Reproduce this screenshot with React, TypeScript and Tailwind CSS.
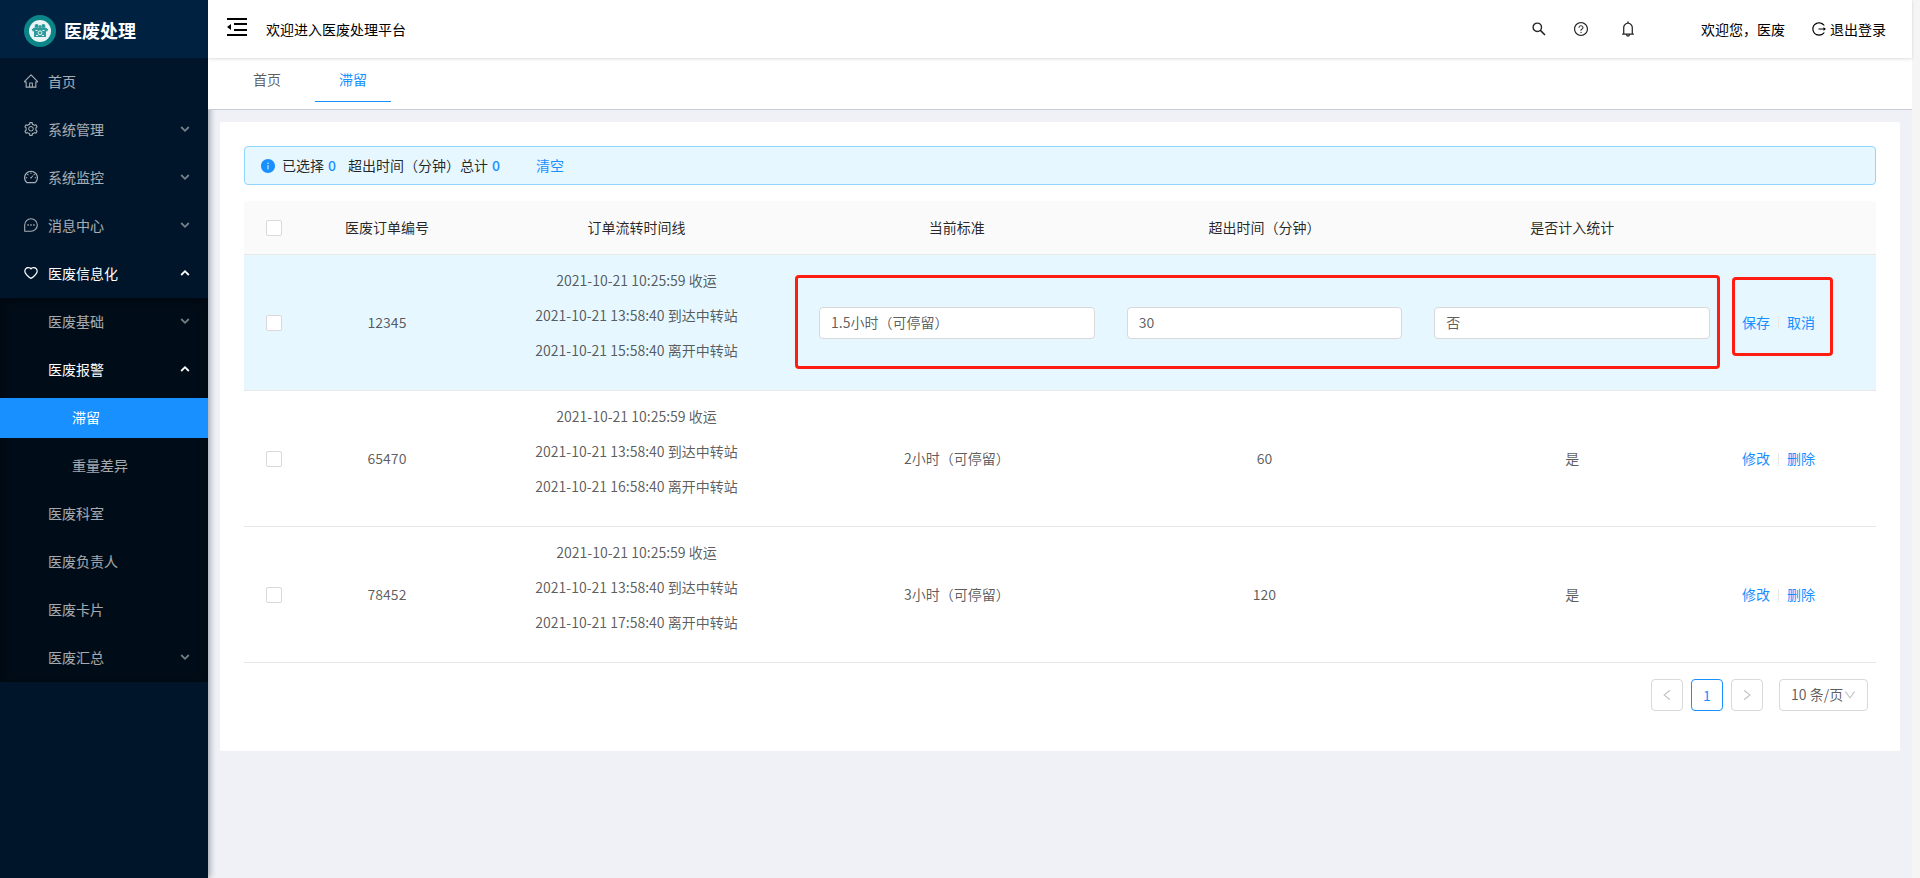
import { useState } from "react";
import {
  AiOutlineHome,
  AiOutlineSetting,
  AiOutlineDashboard,
  AiOutlineHeart,
  AiOutlineQuestionCircle,
  AiOutlineBell,
  AiOutlineLogout,
  AiOutlineLeft,
  AiOutlineRight,
  AiOutlineDown,
  AiFillInfoCircle,
} from "react-icons/ai";
import type { ComponentType } from "react";

type MenuEntry = {
  label: string;
  icon?: ComponentType<{ className?: string }>;
  arrow?: "up" | "down";
  level: 0 | 1 | 2;
  active?: boolean;
};

const topMenu: MenuEntry[] = [
  { label: "首页", icon: AiOutlineHome, level: 0 },
  { label: "系统管理", icon: AiOutlineSetting, arrow: "down", level: 0 },
  { label: "系统监控", icon: AiOutlineDashboard, arrow: "down", level: 0 },
  { label: "消息中心", icon: ChatIcon, arrow: "down", level: 0 },
  { label: "医废信息化", icon: AiOutlineHeart, arrow: "up", level: 0 },
];

const subMenu: MenuEntry[] = [
  { label: "医废基础", arrow: "down", level: 1 },
  { label: "医废报警", arrow: "up", level: 1 },
  { label: "滞留", level: 2, active: true },
  { label: "重量差异", level: 2 },
  { label: "医废科室", level: 1 },
  { label: "医废负责人", level: 1 },
  { label: "医废卡片", level: 1 },
  { label: "医废汇总", arrow: "down", level: 1 },
];

type Row = {
  id: string;
  timeline: string[];
  standard: string;
  exceed: string;
  counted: string;
  editing?: boolean;
};

const rows: Row[] = [
  {
    id: "12345",
    timeline: ["2021-10-21 10:25:59 收运", "2021-10-21 13:58:40 到达中转站", "2021-10-21 15:58:40 离开中转站"],
    standard: "1.5小时（可停留）",
    exceed: "30",
    counted: "否",
    editing: true,
  },
  {
    id: "65470",
    timeline: ["2021-10-21 10:25:59 收运", "2021-10-21 13:58:40 到达中转站", "2021-10-21 16:58:40 离开中转站"],
    standard: "2小时（可停留）",
    exceed: "60",
    counted: "是",
  },
  {
    id: "78452",
    timeline: ["2021-10-21 10:25:59 收运", "2021-10-21 13:58:40 到达中转站", "2021-10-21 17:58:40 离开中转站"],
    standard: "3小时（可停留）",
    exceed: "120",
    counted: "是",
  },
];

function ChatIcon({ className }: { className?: string }) {
  return (
    <svg viewBox="0 0 16 16" fill="none" stroke="currentColor" strokeWidth="1.1" className={className} aria-hidden="true">
      <path d="M1.700 14.300V8a6.300 6.300 0 1 1 6.300 6.300Z" strokeLinejoin="round" />
      <path d="M4.400 8h1.400M7.300 8h1.400M10.200 8h1.400" strokeWidth="1.400" />
    </svg>
  );
}

function SearchIcon() {
  return (
    <svg viewBox="0 0 14 14" width="14" height="14" fill="none" stroke="currentColor" aria-hidden="true">
      <circle cx="5.300" cy="5.300" r="4.200" strokeWidth="1.400" />
      <path d="m8.400 8.400 4.600 4.600" strokeWidth="1.600" />
    </svg>
  );
}

function Chevron({ direction }: { direction: "up" | "down" }) {
  const tone = direction === "down" ? "opacity-70" : "";
  return (
    <svg viewBox="0 0 10 8" width="10" height="8" fill="none" stroke="currentColor" strokeWidth="1.8" className={tone} aria-hidden="true">
      <path d={direction === "down" ? "M1.200 2 5 5.800 8.800 2" : "M1.200 6 5 2.200 8.800 6"} />
    </svg>
  );
}

function Logo() {
  return (
    <svg viewBox="0 0 32 32" className="size-8 shrink-0" aria-hidden="true">
      <circle cx="16" cy="16" r="16" fill="#0b8587" />
      <circle cx="16" cy="16" r="11" fill="#e9f5f5" />
      <g fill="#2f9a9b">
        <circle cx="12.600" cy="11" r="2" />
        <circle cx="19.400" cy="11" r="2" />
        <circle cx="16" cy="11.600" r="1.500" />
        <path d="M7.800 14.200 10.500 12.500h11l2.700 1.700-1 2.300-1.200-.3V22H10v-5.800l-1.200.3Z" />
      </g>
      <g fill="none" stroke="#e9f5f5">
        <path d="M11.500 15.500h2M18.500 15.500h2M12 20.500h2M18 20.500h2" />
        <circle cx="16" cy="17.800" r="1.900" />
      </g>
    </svg>
  );
}

function MenuItem({ item }: { item: MenuEntry }) {
  const Icon = item.icon;
  const tone = item.active || item.arrow === "up" ? "text-white" : "text-white/65";
  const indent = item.level === 0 ? "pl-[23px]" : item.level === 1 ? "pl-12" : "pl-[72px]";
  const fill = item.active ? "bg-[#1890ff]" : "";
  return (
    <li>
      <a href="#" className={`flex h-10 items-center pr-[18px] pb-0.5 ${indent} ${tone} ${fill}`}>
        {Icon && <Icon className="mr-[9px] size-4 shrink-0" />}
        <span className="flex-1">{item.label}</span>
        {item.arrow && <Chevron direction={item.arrow} />}
      </a>
    </li>
  );
}

function Sidebar() {
  return (
    <aside className="z-10 w-52 shrink-0 bg-[#001529] shadow-[2px_0_6px_rgba(0,21,41,0.35)]">
      <div className="flex h-[58px] items-center gap-2 bg-[#002140] pt-1 pl-6">
        <Logo />
        <h1 className="pb-0.5 text-lg font-bold text-white">医废处理</h1>
      </div>
      <nav className="pt-1">
        <ul className="flex flex-col gap-2 pb-1">
          {topMenu.map((item) => (
            <MenuItem key={item.label} item={item} />
          ))}
        </ul>
        <ul className="flex flex-col gap-2 bg-[#000c17] py-1 shadow-[inset_0_2px_8px_rgba(0,0,0,0.45)]">
          {subMenu.map((item) => (
            <MenuItem key={item.label} item={item} />
          ))}
        </ul>
      </nav>
    </aside>
  );
}

function FoldIcon() {
  return (
    <svg viewBox="0 0 20 18" width="20" height="18" fill="#000" aria-hidden="true">
      <path d="M0 0h20v2H0zM7 5h13v2H7zM7 11h13v2H7zM0 16h20v2H0zM0 9l4-3v6z" />
    </svg>
  );
}

function Header() {
  return (
    <header className="relative z-30 flex h-[58px] items-center bg-white pr-[26px] pl-[19px] text-black shadow-[0_1px_3px_rgba(0,21,41,0.15)]">
      <button type="button" aria-label="收起菜单" className="mr-[19px] pb-1">
        <FoldIcon />
      </button>
      <span className="flex-1">欢迎进入医废处理平台</span>
      <div className="flex items-center text-black/85">
        <button type="button" aria-label="搜索" className="mr-[27px]">
          <SearchIcon />
        </button>
        <button type="button" aria-label="帮助" className="mr-[30px]">
          <AiOutlineQuestionCircle className="size-4" />
        </button>
        <button type="button" aria-label="通知" className="mr-[64px]">
          <AiOutlineBell className="size-[18px]" />
        </button>
      </div>
      <span className="mr-[26px]">欢迎您，医废</span>
      <a href="#" className="flex items-center gap-[3px]">
        <AiOutlineLogout className="size-4" />
        退出登录
      </a>
    </header>
  );
}

function Tabs() {
  return (
    <nav className="relative z-20 flex h-[52px] items-start gap-5 border-b border-[#c9cbd3] bg-white pl-[31px]">
      <a href="#" className="flex h-11 items-center border-b border-transparent px-3.5 text-black/65">
        首页
      </a>
      <a href="#" className="flex h-11 items-center border-b border-[#1890ff] px-6 text-[#1890ff]">
        滞留
      </a>
    </nav>
  );
}

function CheckBox({ label }: { label: string }) {
  return (
    <input
      type="checkbox"
      aria-label={label}
      className="mx-auto block size-4 appearance-none rounded-xs border border-[#d9d9d9] bg-white checked:border-[#1890ff] checked:bg-[#1890ff]"
    />
  );
}

function EditableCell({ value, label, editing }: { value: string; label: string; editing?: boolean }) {
  const [text, setText] = useState(value);
  return (
    <td className="px-4 text-center">
      {editing ? (
        <input
          type="text"
          aria-label={label}
          value={text}
          onChange={(event) => setText(event.target.value)}
          className="block h-8 w-full rounded-sm border border-[#d9d9d9] bg-white px-[11px] pb-0.5"
        />
      ) : (
        value
      )}
    </td>
  );
}

function RetentionTable() {
  return (
    <div className="relative">
      <table className="w-full table-fixed border-separate border-spacing-0 text-black/65">
        <colgroup>
          <col className="w-[60px]" />
          <col className="w-[166px]" />
          <col className="w-[333px]" />
          <col />
          <col />
          <col />
          <col className="w-[150px]" />
        </colgroup>
        <thead>
          <tr className="h-[54px] text-black/85 [&>th]:border-b [&>th]:border-[#e8e8e8] [&>th]:bg-[#fafafa] [&>th]:font-normal">
            <th className="rounded-tl-sm">
              <CheckBox label="全选" />
            </th>
            <th>医废订单编号</th>
            <th>订单流转时间线</th>
            <th>当前标准</th>
            <th>超出时间（分钟）</th>
            <th>是否计入统计</th>
            <th className="rounded-tr-sm" aria-label="操作" />
          </tr>
        </thead>
        <tbody>
          {rows.map((row) => (
            <tr
              key={row.id}
              className={`[&>td]:border-b [&>td]:border-[#e8e8e8] ${row.editing ? "bg-[#e6f7ff]" : ""}`}
            >
              <td>
                <CheckBox label={`选择 ${row.id}`} />
              </td>
              <td className="text-center">{row.id}</td>
              <td className="py-[15px] text-center">
                {row.timeline.map((line) => (
                  <p key={line} className="mb-3.5">
                    {line}
                  </p>
                ))}
              </td>
              <EditableCell value={row.standard} label="当前标准" editing={row.editing} />
              <EditableCell value={row.exceed} label="超出时间（分钟）" editing={row.editing} />
              <EditableCell value={row.counted} label="是否计入统计" editing={row.editing} />
              <td className="px-4">
                <div className="flex items-center text-[#1890ff]">
                  <button type="button">{row.editing ? "保存" : "修改"}</button>
                  <span className="mx-2 h-3 w-px bg-[#e8e8e8]" />
                  <button type="button">{row.editing ? "取消" : "删除"}</button>
                </div>
              </td>
            </tr>
          ))}
        </tbody>
      </table>
      <div className="pointer-events-none absolute top-[74px] right-[156px] left-[551px] h-[94px] rounded-sm border-3 border-[#ff1c10]" />
      <div className="pointer-events-none absolute top-[76px] right-[43px] h-[79px] w-[101px] rounded-sm border-3 border-[#ff1c10]" />
    </div>
  );
}

function Pagination() {
  return (
    <div className="mt-4 flex justify-end gap-2 pr-2 text-black/65">
      <button
        type="button"
        aria-label="上一页"
        className="flex size-8 items-center justify-center rounded-sm border border-[#d9d9d9] text-black/25"
      >
        <AiOutlineLeft className="size-[14px]" />
      </button>
      <button
        type="button"
        className="flex size-8 items-center justify-center rounded-sm border border-[#1890ff] text-[#1890ff]"
      >
        1
      </button>
      <button
        type="button"
        aria-label="下一页"
        className="flex size-8 items-center justify-center rounded-sm border border-[#d9d9d9] text-black/25"
      >
        <AiOutlineRight className="size-[14px]" />
      </button>
      <div className="relative ml-2">
        <select
          aria-label="每页条数"
          className="h-8 w-[89px] appearance-none rounded-sm border border-[#d9d9d9] bg-white pb-0.5 pl-[11px]"
        >
          <option>10 条/页</option>
        </select>
        <AiOutlineDown className="pointer-events-none absolute top-[9px] right-[11px] size-[14px] text-black/25" />
      </div>
    </div>
  );
}

export default function App() {
  return (
    <div className="flex min-h-screen bg-[#f0f1f6] font-['Noto_Sans_CJK_SC',sans-serif] text-sm leading-[21px]">
      <Sidebar />
      <div className="flex min-w-0 flex-1 flex-col">
        <Header />
        <Tabs />
        <main className="p-3">
          <section className="rounded-xs bg-white px-6 pt-6 pb-10">
            <div className="mb-4 flex h-[39px] items-center rounded-sm border border-[#91d5ff] bg-[#e6f7ff] px-[15px] text-black/85">
              <AiFillInfoCircle className="mr-1.5 size-4 text-[#1890ff]" />
              <span>已选择</span>
              <b className="ml-1 font-medium text-[#1890ff]">0</b>
              <span className="ml-3">超出时间（分钟）总计</span>
              <b className="ml-1 font-medium text-[#1890ff]">0</b>
              <button type="button" className="ml-9 text-[#1890ff]">
                清空
              </button>
            </div>
            <RetentionTable />
            <Pagination />
          </section>
        </main>
      </div>
      <div className="w-2 shrink-0 bg-[#f5f5f5]" />
    </div>
  );
}
